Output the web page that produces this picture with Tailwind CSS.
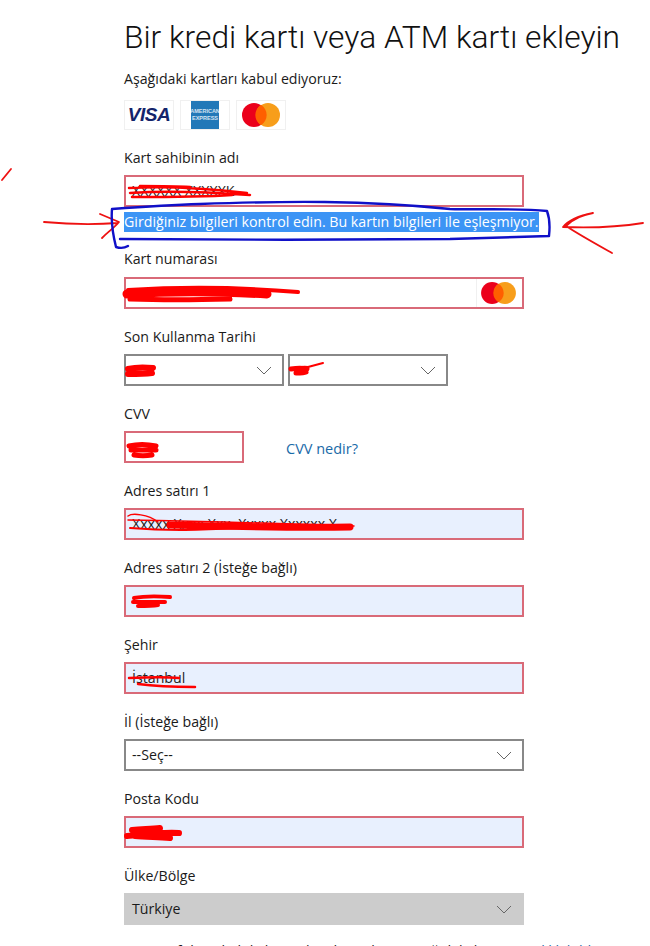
<!DOCTYPE html>
<html lang="tr">
  <head>
    <meta charset="UTF-8" />
    <script src="https://cdn.jsdelivr.net/npm/@tailwindcss/browser@4"></script>
    <title>Kart ekle</title>
  </head>
  <body class="bg-white">
    <div class="relative h-[946px] w-[650px] overflow-hidden font-['Open_Sans','Noto_Sans',sans-serif] text-[14.2px] text-[#1a1a1a]">
      <main class="flex flex-col pl-[124px] pt-[14px]">
        <h1 class="h-[50px] whitespace-nowrap font-['Roboto',sans-serif] text-[31.75px] font-light leading-[48px] text-[#111]">Bir kredi kartı veya ATM kartı ekleyin</h1>
        <p class="mt-[5px] leading-[20px]">Aşağıdaki kartları kabul ediyoruz:</p>

        <div class="mt-[11px] flex gap-[6px]">
          <div class="flex h-[30px] w-[50px] items-center justify-center border border-[#f0f0f0]">
            <span class="font-['Liberation_Sans'] text-[19px] font-bold italic tracking-[-0.5px] text-[#14246b]">VISA</span>
          </div>
          <div class="flex h-[30px] w-[50px] items-center justify-center border border-[#f0f0f0]">
            <div class="flex h-[28px] w-[28px] flex-col items-center justify-center whitespace-nowrap bg-[#2278b8] font-['Liberation_Sans'] text-[5.5px] font-bold leading-[7px] text-white/80">
              <span>AMERICAN</span>
              <span>EXPRESS</span>
            </div>
          </div>
          <div class="flex h-[30px] w-[50px] items-center justify-center border border-[#f0f0f0]">
            <svg width="38" height="24" viewBox="0 0 38 24"><circle cx="12" cy="12" r="12" fill="#eb001b"/><circle cx="26" cy="12" r="12" fill="#f79e1b"/><path d="M19 1.8a12 12 0 0 1 0 20.4a12 12 0 0 1 0-20.4z" fill="#ff5f00"/></svg>
          </div>
        </div>

        <label class="mt-[18px] leading-[20px]">Kart sahibinin adı</label>
        <div class="mt-[7px] flex h-[32px] w-[400px] items-center border-2 border-[#d96a78] px-[6px]">
          <span class="whitespace-nowrap">XXXXXX XXXXXK</span>
        </div>
        <div class="mt-[5px] h-[20px] w-[415px] whitespace-nowrap bg-[#3c94f5] leading-[20px] text-white">Girdiğiniz bilgileri kontrol edin. Bu kartın bilgileri ile eşleşmiyor.</div>

        <label class="mt-[17px] leading-[20px]">Kart numarası</label>
        <div class="mt-[8px] flex h-[32px] w-[400px] items-center justify-end border-2 border-[#d96a78] pr-[6px]">
          <div class="flex h-full items-center border-l border-[#f0f0f0] pl-[4px]">
            <svg width="35" height="22" viewBox="0 0 38 24"><circle cx="12" cy="12" r="12" fill="#eb001b"/><circle cx="26" cy="12" r="12" fill="#f79e1b"/><path d="M19 1.8a12 12 0 0 1 0 20.4a12 12 0 0 1 0-20.4z" fill="#ff5f00"/></svg>
          </div>
        </div>

        <label class="mt-[18px] leading-[20px]">Son Kullanma Tarihi</label>
        <div class="mt-[7px] flex gap-[4px]">
          <div class="flex h-[32px] w-[160px] items-center justify-end border-2 border-[#888] pr-[10px]">
            <svg width="16" height="9" viewBox="0 0 16 9" fill="none" stroke="#666" stroke-width="1"><path d="M1 1l7 7 7-7"/></svg>
          </div>
          <div class="flex h-[32px] w-[160px] items-center justify-end border-2 border-[#888] pr-[10px]">
            <svg width="16" height="9" viewBox="0 0 16 9" fill="none" stroke="#666" stroke-width="1"><path d="M1 1l7 7 7-7"/></svg>
          </div>
        </div>

        <label class="mt-[18px] leading-[20px]">CVV</label>
        <div class="mt-[7px] flex items-center">
          <div class="h-[32px] w-[120px] border-2 border-[#d96a78]"></div>
          <a class="ml-[42px] mt-[4px] text-[14.5px] text-[#1a6aa8]">CVV nedir?</a>
        </div>

        <label class="mt-[18px] leading-[20px]">Adres satırı 1</label>
        <div class="mt-[7px] flex h-[32px] w-[400px] items-center border-2 border-[#d96a78] bg-[#e8f0fe] px-[6px]">
          <span class="whitespace-nowrap text-[#222]">Xxxxx Xxxx Xxx. Xxxxx Xxxxxx X</span>
        </div>

        <label class="mt-[18px] leading-[20px]">Adres satırı 2 (İsteğe bağlı)</label>
        <div class="mt-[7px] h-[32px] w-[400px] border-2 border-[#d96a78] bg-[#e8f0fe]"></div>

        <label class="mt-[18px] leading-[20px]">Şehir</label>
        <div class="mt-[7px] flex h-[32px] w-[400px] items-center border-2 border-[#d96a78] bg-[#e8f0fe] px-[6px]">
          <span class="text-[#222]">İstanbul</span>
        </div>

        <label class="mt-[18px] leading-[20px]">İl (İsteğe bağlı)</label>
        <div class="mt-[7px] flex h-[32px] w-[400px] items-center justify-between border-2 border-[#888] pl-[6px] pr-[10px]">
          <span>--Seç--</span>
          <svg width="16" height="9" viewBox="0 0 16 9" fill="none" stroke="#666" stroke-width="1"><path d="M1 1l7 7 7-7"/></svg>
        </div>

        <label class="mt-[18px] leading-[20px]">Posta Kodu</label>
        <div class="mt-[7px] h-[32px] w-[400px] border-2 border-[#d96a78] bg-[#e8f0fe]"></div>

        <label class="mt-[18px] leading-[20px]">Ülke/Bölge</label>
        <div class="mt-[7px] flex h-[32px] w-[400px] items-center justify-between bg-[#cccccc] pl-[8px] pr-[12px]">
          <span>Türkiye</span>
          <svg width="16" height="9" viewBox="0 0 16 9" fill="none" stroke="#666" stroke-width="1"><path d="M1 1l7 7 7-7"/></svg>
        </div>

        <p class="mt-[16px] whitespace-nowrap leading-[20px]">Microsoft hesabı bilgilerimi kaydetmek için aşağıdaki kutuyu <a class="text-[#1a6aa8]">gizlilik bildirimi</a></p>
      </main>

      <!-- hand drawn marks over the screenshot -->
      <svg class="absolute left-0 top-0" width="650" height="946" viewBox="0 0 650 946" fill="none" stroke-linecap="round" stroke-linejoin="round">
        <g stroke="#ee1111" stroke-width="1.8">
          <path d="M2 180l9-11"/>
          <path d="M44 222c22 2 46 3 74 1M100 214l19 8c-4 5-11 10-17 16"/>
          <path d="M643 223c-25 4-55 5-80 4 5-6 15-11 30-14-8 1-20 6-27 13 12 8 30 18 46 27"/>
        </g>
        <g stroke="#ff0000">
          <path d="M129 188c35-2 75 0 118 5M130 193c40-3 80-1 120 2M132 197c30 0 70 0 100-2M140 186c20 0 35 0 50 1" stroke-width="2.5"/>
          <path d="M128 290c50-3 110-3 170 2" stroke-width="4"/>
          <path d="M127 294c40-3 90-3 140 0" stroke-width="9"/>
          <path d="M130 299c30 1 60 1 100 0" stroke-width="5"/>
          <path d="M128 369c8-2 16-2 25-1M128 374c8 0 16 0 24-1" stroke-width="6"/>
          <path d="M290 369c8-2 14-3 18-2l15-4" stroke-width="2"/>
          <path d="M291 369c6-1 12-1 16 0M296 373c4 0 8 0 10-1" stroke-width="5"/>
          <path d="M129 446c8-2 18-2 27 0M131 450c8 0 16 0 25 0M134 455c6 1 12 1 18 0" stroke-width="5"/>
          <path d="M128 520c60 1 140 3 226 6" stroke-width="1.5"/>
          <path d="M170 525c50 1 110 3 180 2" stroke-width="7"/>
          <path d="M130 528c40 3 70 2 110 0" stroke-width="2"/>
          <path d="M128 516c4-3 20-2 30 6" stroke-width="1.5"/>
          <path d="M134 598c10-2 22-2 36-1M133 602c10 0 22 0 32 0M138 606c6 0 14 0 20-1" stroke-width="4"/>
          <path d="M129 678c20-1 40-1 50 0" stroke-width="2.5"/>
          <path d="M138 684c15 2 35 3 57 3" stroke-width="2.5"/>
          <path d="M127 836c15-1 30-4 52-3M132 830c12-1 20-1 28-2M135 836c10 1 20 1 35 2" stroke-width="6"/>
        </g>
        <path d="M128 246c-5 3-9 2-12 1-3-12-5-26-4-38 28-2 58-4 88-5 84-3 165-4 250 5 30 1 68-1 97 2 3 8 3 16 2 25-28 1-57 2-99 3-110 1-220 1-330 0" stroke="#1010c8" stroke-width="2.4"/>
      </svg>
    </div>
  </body>
</html>
